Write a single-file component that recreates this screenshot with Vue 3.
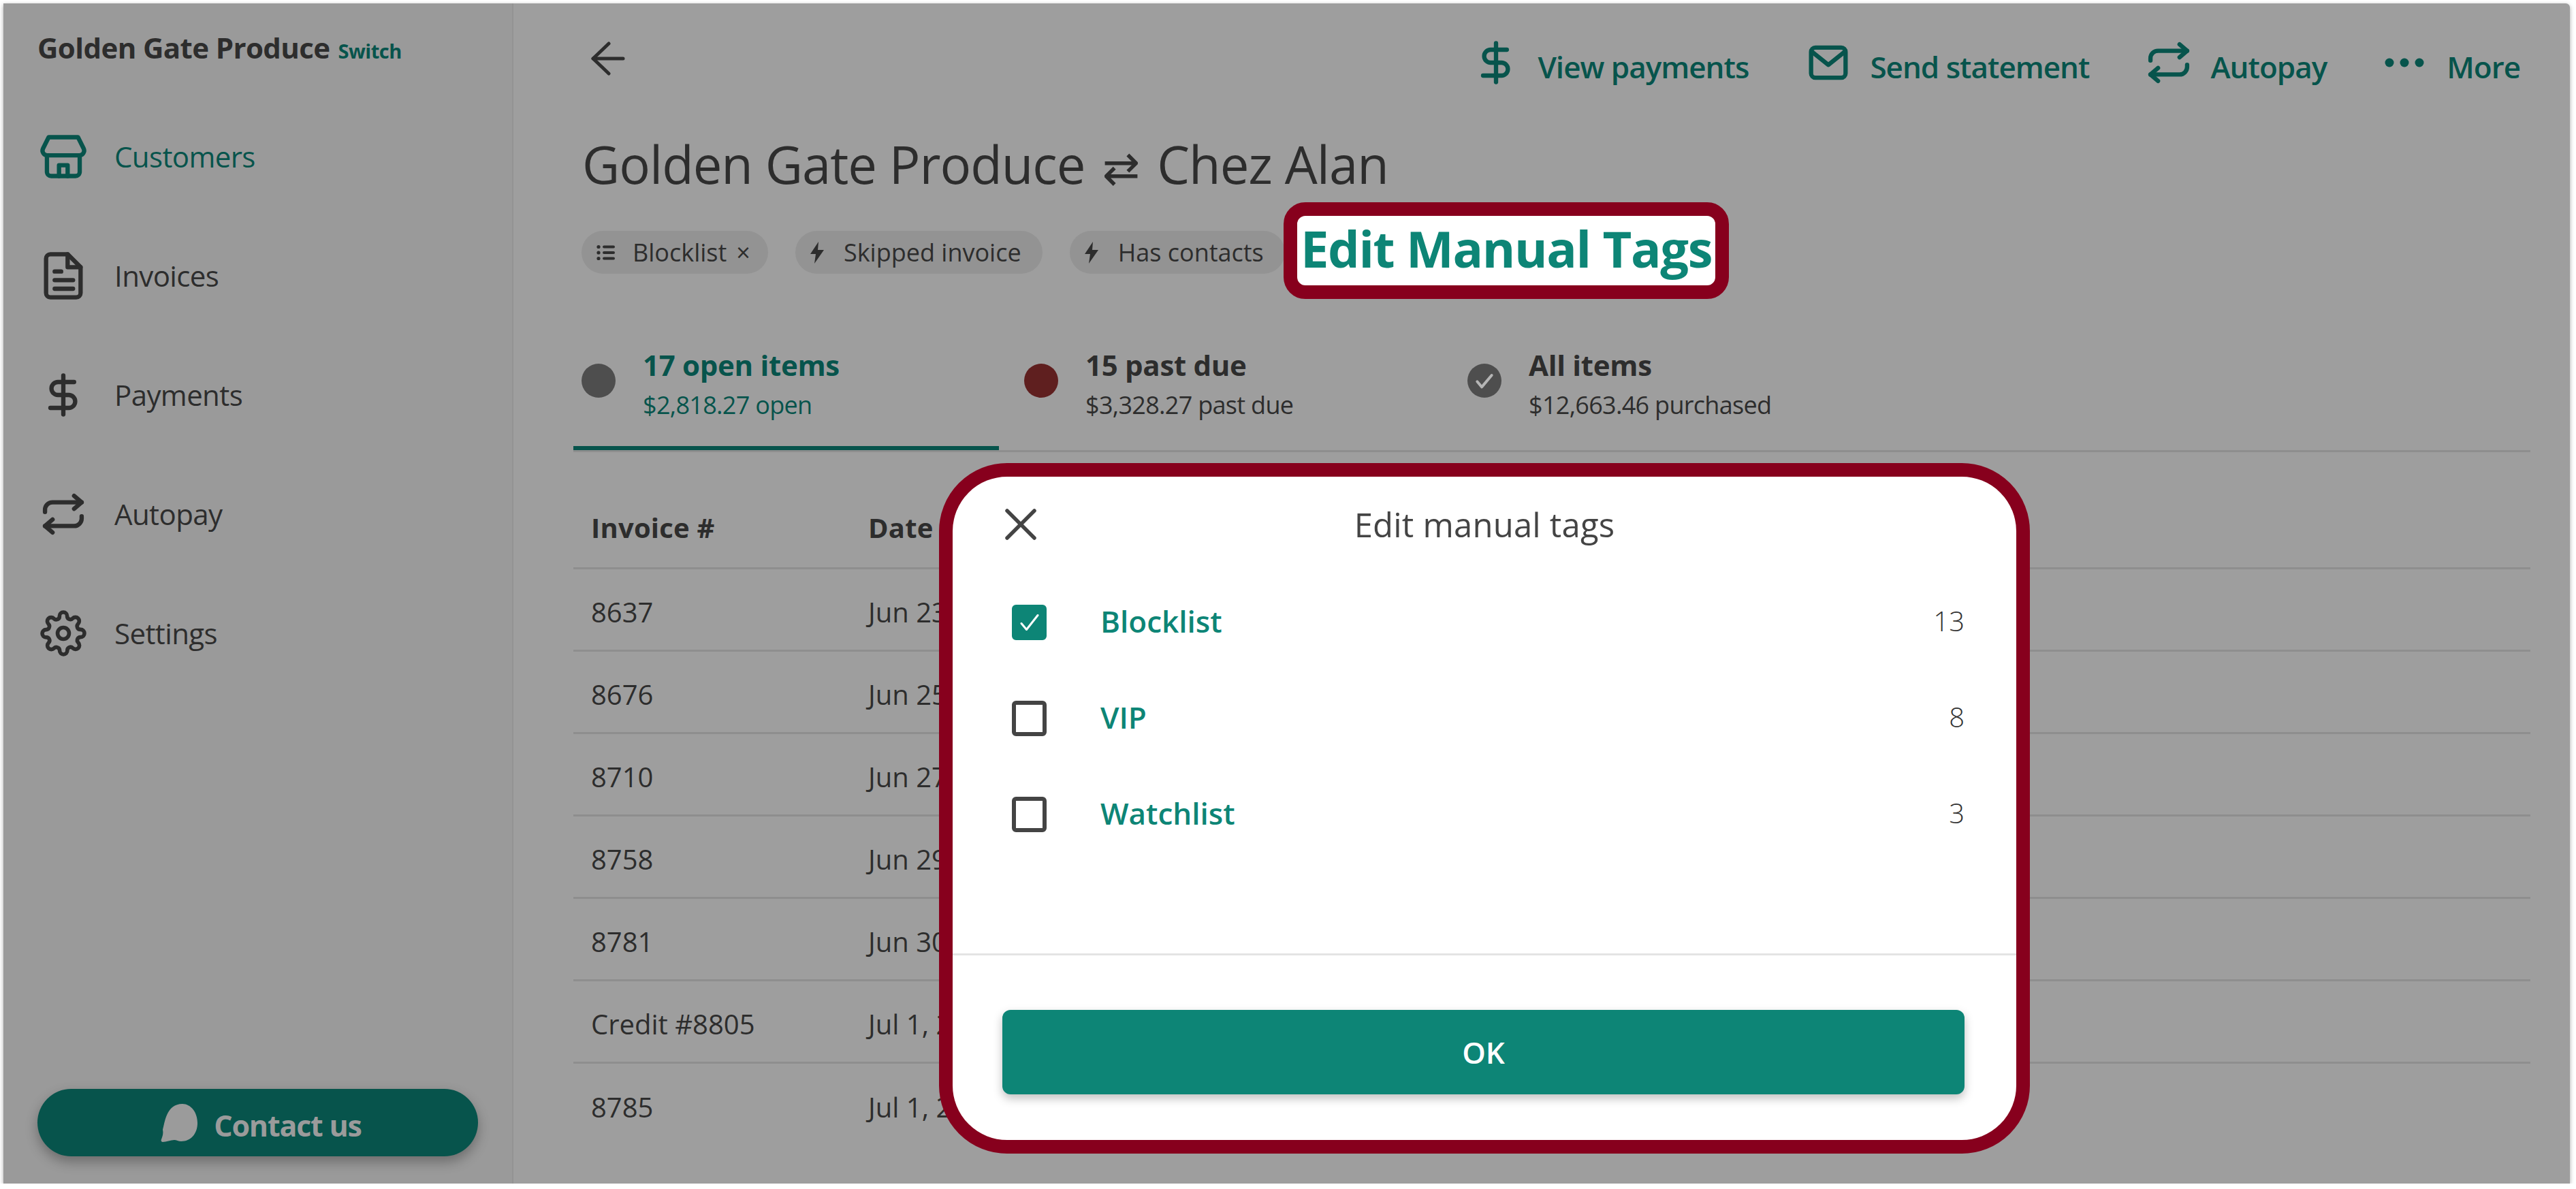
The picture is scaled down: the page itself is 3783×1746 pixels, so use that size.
<script setup>
import { ref } from "vue";

const ICONS = {
  store: [
    "M5.2 3h13.6l2.6 5.2a2.2 2.2 0 0 1-2 3.2H4.6a2.2 2.2 0 0 1-2-3.2z",
    "M4.4 11.4V19a2 2 0 0 0 2 2h11.2a2 2 0 0 0 2-2v-7.6",
    "M10 21v-5h4v5",
  ],
  doc: [
    "M6 2h8l6 6v12a2 2 0 0 1-2 2H6a2 2 0 0 1-2-2V4a2 2 0 0 1 2-2z",
    "M14 2v6h6",
    "M8 10h3",
    "M8 14h8.5",
    "M8 18h8.5",
  ],
  dollar: ["M12 3v18", "M17 6H9.5a3 3 0 0 0 0 6h5a3 3 0 0 1 0 6H6"],
  repeat: [
    "M17 3.5l3.5 3-3.5 3",
    "M3.5 11V10a3.5 3.5 0 0 1 3.5-3.5h13.5",
    "M7 20.5l-3.5-3 3.5-3",
    "M20.5 13v1a3.5 3.5 0 0 1-3.5 3.5H3.5",
  ],
  gear: [
    "M15 12a3 3 0 1 1-6 0 3 3 0 0 1 6 0z",
    "M19.4 15a1.65 1.65 0 0 0 .33 1.82l.06.06a2 2 0 0 1 0 2.83 2 2 0 0 1-2.83 0l-.06-.06a1.65 1.65 0 0 0-1.82-.33 1.65 1.65 0 0 0-1 1.51V21a2 2 0 0 1-2 2 2 2 0 0 1-2-2v-.09A1.65 1.65 0 0 0 9 19.4a1.65 1.65 0 0 0-1.82.33l-.06.06a2 2 0 0 1-2.83 0 2 2 0 0 1 0-2.83l.06-.06a1.65 1.65 0 0 0 .33-1.82 1.65 1.65 0 0 0-1.51-1H3a2 2 0 0 1-2-2 2 2 0 0 1 2-2h.09A1.65 1.65 0 0 0 4.6 9a1.65 1.65 0 0 0-.33-1.82l-.06-.06a2 2 0 0 1 0-2.83 2 2 0 0 1 2.83 0l.06.06a1.65 1.65 0 0 0 1.82.33H9a1.65 1.65 0 0 0 1-1.51V3a2 2 0 0 1 2-2 2 2 0 0 1 2 2v.09a1.65 1.65 0 0 0 1 1.51 1.65 1.65 0 0 0 1.82-.33l.06-.06a2 2 0 0 1 2.83 0 2 2 0 0 1 0 2.83l-.06.06a1.65 1.65 0 0 0-.33 1.82V9a1.65 1.65 0 0 0 1.51 1H21a2 2 0 0 1 2 2 2 2 0 0 1-2 2h-.09a1.65 1.65 0 0 0-1.51 1z",
  ],
  mail: ["M6 5h12a2 2 0 0 1 2 2v10a2 2 0 0 1-2 2H6a2 2 0 0 1-2-2V7a2 2 0 0 1 2-2z", "M4.5 7L12 13l7.5-6"],
};

const navItems = [
  { label: "Customers", icon: "store", box: "0 0 24 24", active: true },
  { label: "Invoices", icon: "doc", box: "0 0 24 24" },
  { label: "Payments", icon: "dollar", box: "0 0 24 24" },
  { label: "Autopay", icon: "repeat", box: "0 0 24 24" },
  { label: "Settings", icon: "gear", box: "-1.5 -1.5 27 27" },
];

const actions = [
  { label: "View payments", icon: "dollar" },
  { label: "Send statement", icon: "mail" },
  { label: "Autopay", icon: "repeat" },
];

const tabs = [
  { title: "17 open items", sub: "$2,818.27 open", dot: "grey", active: true },
  { title: "15 past due", sub: "$3,328.27 past due", dot: "red" },
  { title: "All items", sub: "$12,663.46 purchased", dot: "grey", check: true },
];

const rows = [
  ["8637", "Jun 23, 2023"],
  ["8676", "Jun 25, 2023"],
  ["8710", "Jun 27, 2023"],
  ["8758", "Jun 29, 2023"],
  ["8781", "Jun 30, 2023"],
  ["Credit #8805", "Jul 1, 2023"],
  ["8785", "Jul 1, 2023"],
];

const tags = ref([
  { name: "Blocklist", count: 13, checked: true },
  { name: "VIP", count: 8, checked: false },
  { name: "Watchlist", count: 3, checked: false },
]);
</script>

<template>
  <div class="window">
    <aside class="sidebar">
      <div class="org">
        <span class="org-name">Golden Gate Produce</span>
        <a class="org-switch">Switch</a>
      </div>
      <nav class="nav">
        <a v-for="item in navItems" :key="item.label" class="nav-item" :class="{ active: item.active }">
          <svg class="nav-icon" :viewBox="item.box" fill="none" stroke="currentColor" stroke-width="2" stroke-linecap="round" stroke-linejoin="round">
            <path v-for="d in ICONS[item.icon]" :key="d" :d="d" />
          </svg>
          <span>{{ item.label }}</span>
        </a>
      </nav>
      <button class="contact" type="button">
        <svg viewBox="0 0 54 56" width="54" height="56" fill="currentColor">
          <path d="M32 0C44 0 54 12 54 28 54 44 44 55 30 55 26 55 23 53 20 53 15 53 8 56 3 56 1 56 0 54 1 52 3 47 4 43 3 38 6 28 8 0 32 0z" />
        </svg>
        <span class="contact-label">Contact us</span>
      </button>
    </aside>

    <main class="main">
      <header class="topbar">
        <svg class="back" viewBox="0 0 50 50" fill="none" stroke="currentColor" stroke-width="5" stroke-linecap="round" stroke-linejoin="round">
          <path d="M47 25H3" />
          <path d="M26 3L3 25l23 22" />
        </svg>
        <div class="actions">
          <a v-for="a in actions" :key="a.label" class="action">
            <svg class="action-icon" viewBox="0 0 24 24" fill="none" stroke="currentColor" stroke-width="2" stroke-linecap="round" stroke-linejoin="round">
              <path v-for="d in ICONS[a.icon]" :key="d" :d="d" />
            </svg>
            <span>{{ a.label }}</span>
          </a>
          <a class="action action-more">
            <svg class="more-icon" viewBox="0 0 60 14" fill="currentColor">
              <circle cx="8" cy="7" r="6.5" />
              <circle cx="30" cy="7" r="6.5" />
              <circle cx="52" cy="7" r="6.5" />
            </svg>
            <span>More</span>
          </a>
        </div>
      </header>

      <h1 class="title">Golden Gate Produce <span class="swap">⇄</span> Chez Alan</h1>

      <div class="chips">
        <span class="chip">
          <svg class="chip-list" viewBox="0 0 27 24" fill="currentColor">
            <circle cx="3" cy="3.5" r="2.6" />
            <circle cx="3" cy="12" r="2.6" />
            <circle cx="3" cy="20.5" r="2.6" />
            <rect x="9" y="1.5" width="18" height="4" rx="2" />
            <rect x="9" y="10" width="18" height="4" rx="2" />
            <rect x="9" y="18.5" width="18" height="4" rx="2" />
          </svg>
          Blocklist
          <span class="chip-x">×</span>
        </span>
        <span class="chip chip-auto">
          <svg class="chip-bolt" viewBox="0 0 20 32" fill="currentColor">
            <path d="M12 0L0 18h8L6 32l14-20h-9z" />
          </svg>
          Skipped invoice
        </span>
        <span class="chip chip-auto">
          <svg class="chip-bolt" viewBox="0 0 20 32" fill="currentColor">
            <path d="M12 0L0 18h8L6 32l14-20h-9z" />
          </svg>
          Has contacts
        </span>
      </div>

      <div class="tabs">
        <div v-for="t in tabs" :key="t.title" class="tab" :class="{ active: t.active }">
          <span class="dot" :class="t.dot">
            <svg v-if="t.check" viewBox="0 0 24 24" width="32" height="32" fill="none" stroke="#b5b5b5" stroke-width="3" stroke-linecap="round" stroke-linejoin="round">
              <path d="M4 13l5 6L20 6" />
            </svg>
          </span>
          <div class="tab-text">
            <div class="tab-title">{{ t.title }}</div>
            <div class="tab-sub">{{ t.sub }}</div>
          </div>
        </div>
      </div>

      <div class="table">
        <div class="table-row head">
          <span class="col-num">Invoice #</span>
          <span>Date</span>
        </div>
        <div v-for="r in rows" :key="r[0]" class="table-row">
          <span class="col-num">{{ r[0] }}</span>
          <span>{{ r[1] }}</span>
        </div>
      </div>
    </main>

    <div class="callout"><span class="callout-text">Edit Manual Tags</span></div>

    <section class="modal" role="dialog" aria-modal="true">
      <header class="modal-head">
        <svg class="modal-close" viewBox="0 0 46 46" fill="none" stroke="#444" stroke-width="5.5" stroke-linecap="round">
          <path d="M3 3l40 40M43 3L3 43" />
        </svg>
        <h2 class="modal-title">Edit manual tags</h2>
      </header>
      <ul class="tag-list">
        <li v-for="tag in tags" :key="tag.name" class="tag-row">
          <span class="box" :class="{ checked: tag.checked }">
            <svg v-if="tag.checked" viewBox="0 0 24 24" width="36" height="36" fill="none" stroke="#fff" stroke-width="2" stroke-linecap="round" stroke-linejoin="round">
              <path d="M4 13l5 6L20 5" />
            </svg>
          </span>
          <span class="tag-name">{{ tag.name }}</span>
          <span class="tag-count">{{ tag.count }}</span>
        </li>
      </ul>
      <footer class="modal-foot">
        <button class="ok" type="button">OK</button>
      </footer>
    </section>
  </div>
</template>

<style>
html,
body {
  margin: 0;
  background: #fff;
  overflow: hidden;
}
</style>

<style scoped>
.window {
  position: relative;
  display: flex;
  width: 3769px;
  height: 1733px;
  margin: 5px 0 0 5px;
  background: #9e9e9e;
  border-radius: 0 6px 0 0;
  box-shadow: 0 2px 6px rgba(0, 0, 0, 0.35);
  overflow: hidden;
  font-family: "Open Sans", "Noto Sans", sans-serif;
  color: #2d2d2d;
}

.sidebar {
  display: flex;
  flex-direction: column;
  box-sizing: border-box;
  width: 749px;
  padding: 40px 50px 40px;
  background: #9a9a9a;
  border-right: 2px solid #939393;
}

.org {
  display: flex;
  align-items: baseline;
  gap: 12px;
  line-height: 50px;
  white-space: nowrap;
}

.org-name {
  font-size: 42px;
  font-weight: 700;
  letter-spacing: -0.6px;
}

.org-switch {
  font-size: 29px;
  font-weight: 700;
  color: #07544c;
  letter-spacing: -0.5px;
}

.nav {
  display: flex;
  flex-direction: column;
  margin-top: 42px;
}

.nav-item {
  display: flex;
  align-items: center;
  gap: 37px;
  height: 175px;
  font-size: 42px;
  letter-spacing: -0.6px;
}

.nav-item.active {
  color: #07544c;
  font-weight: 500;
}

.nav-icon {
  width: 76px;
  height: 76px;
  flex: none;
}

.contact {
  display: flex;
  align-items: center;
  justify-content: center;
  gap: 24px;
  width: 647px;
  height: 99px;
  margin-top: auto;
  padding: 0 0 0 10px;
  border: none;
  border-radius: 50px;
  background: #07544c;
  color: #9b9b9b;
  font: 700 43px "Open Sans", sans-serif;
  letter-spacing: -1.2px;
  box-shadow: 0 8px 18px rgba(0, 0, 0, 0.3);
}

.contact-label {
  padding-top: 8px;
}

.main {
  flex: 1;
  min-width: 0;
  box-sizing: border-box;
  padding: 50px 58px 0 88px;
}

.topbar {
  display: flex;
  align-items: center;
  justify-content: space-between;
  height: 60px;
  padding-right: 15px;
}

.back {
  width: 50px;
  height: 50px;
  margin-left: 26px;
  margin-top: 2px;
}

.actions {
  display: flex;
  align-items: center;
  gap: 79px;
  margin-top: 26px;
  color: #07544c;
  font-size: 44px;
  font-weight: 600;
  letter-spacing: -1px;
}

.action {
  display: flex;
  align-items: center;
  gap: 23px;
}

.action-more {
  margin-left: 5px;
}

.action-icon {
  width: 76px;
  height: 76px;
  margin-top: -12px;
}

.more-icon {
  width: 60px;
  height: 14px;
  margin-top: -12px;
  margin-right: 9px;
}

.title {
  margin: 76px 0 0 13px;
  font-size: 76px;
  font-weight: 500;
  line-height: 100px;
  white-space: nowrap;
  letter-spacing: -1px;
}

.swap {
  margin: 0 7px;
  font-family: "DejaVu Sans", sans-serif;
  font-size: 66px;
}

.chips {
  display: flex;
  gap: 40px;
  margin: 41px 0 0 12px;
}

.chip {
  display: flex;
  align-items: center;
  height: 63px;
  padding: 0 26px 0 22px;
  border-radius: 32px;
  background: #939393;
  font-size: 36px;
  white-space: nowrap;
}

.chip-auto {
  padding-right: 31px;
}

.chip-list {
  width: 27px;
  height: 24px;
  margin-right: 26px;
}

.chip-bolt {
  width: 20px;
  height: 32px;
  margin-right: 29px;
}

.chip-x {
  margin-left: 14px;
  font-size: 36px;
  line-height: 1;
}

.tabs {
  display: flex;
  box-sizing: border-box;
  height: 262px;
  padding-top: 88px;
  border-bottom: 3px solid #8e8e8e;
}

.tab {
  display: flex;
  align-items: center;
  gap: 40px;
  height: 154px;
  padding-bottom: 11px;
  border-bottom: 6px solid transparent;
}

.tab:nth-child(1) {
  width: 613px;
  padding-left: 12px;
}

.tab:nth-child(2) {
  width: 611px;
  padding-left: 37px;
}

.tab:nth-child(3) {
  padding-left: 40px;
}

.tab.active {
  border-bottom-color: #07544c;
  color: #07544c;
}

.dot {
  display: flex;
  align-items: center;
  justify-content: center;
  flex: none;
  width: 50px;
  height: 50px;
  border-radius: 50%;
  margin-top: -16px;
}

.dot.grey {
  background: #4e4e4e;
}

.dot.red {
  background: #5f1f1f;
}

.tab-text {
  margin-top: -5px;
}

.tab-title {
  font-size: 42px;
  font-weight: 700;
  line-height: 59px;
  letter-spacing: -0.3px;
}

.tab-sub {
  font-size: 36px;
  line-height: 59px;
  letter-spacing: -0.7px;
}

.table-row {
  display: flex;
  align-items: center;
  box-sizing: border-box;
  height: 121px;
  padding-top: 6px;
  border-bottom: 3px solid #8e8e8e;
  font-size: 40px;
}

.table-row:last-child {
  border-bottom: none;
}

.table-row.head {
  height: 172px;
  padding-top: 51px;
  font-weight: 700;
  font-size: 40px;
  letter-spacing: 0.2px;
}

.table-row span {
  white-space: nowrap;
}

.col-num {
  width: 407px;
  padding-left: 26px;
}

.callout {
  position: absolute;
  left: 1880px;
  top: 292px;
  box-sizing: border-box;
  display: flex;
  align-items: center;
  justify-content: center;
  width: 654px;
  height: 142px;
  border: 20px solid #87001d;
  border-radius: 32px;
  background: #fff;
  color: #0d8576;
  font-size: 74px;
  font-weight: 700;
  letter-spacing: -1.4px;
  white-space: nowrap;
}

.callout-text {
  margin-top: -8px;
}

.modal {
  position: absolute;
  left: 1374px;
  top: 675px;
  box-sizing: border-box;
  display: flex;
  flex-direction: column;
  width: 1602px;
  height: 1014px;
  border: 20px solid #87001d;
  border-radius: 100px;
  background: #fff;
  color: #444;
}

.modal-head {
  position: relative;
  display: flex;
  align-items: center;
  justify-content: center;
  height: 140px;
}

.modal-close {
  position: absolute;
  left: 77px;
  top: 47px;
  width: 46px;
  height: 46px;
}

.modal-title {
  margin: 0;
  font-size: 49px;
  font-weight: 400;
  letter-spacing: 0.2px;
}

.tag-list {
  flex: 1;
  margin: 0;
  padding: 3px 76px 0 87px;
  list-style: none;
}

.tag-row {
  display: flex;
  align-items: center;
  height: 141px;
}

.box {
  display: flex;
  align-items: center;
  justify-content: center;
  box-sizing: border-box;
  width: 51px;
  height: 52px;
  border: 6px solid #444;
  border-radius: 6px;
}

.box.checked {
  border-color: #0d8576;
  background: #0d8576;
}

.tag-name {
  margin-left: 79px;
  margin-top: -4px;
  color: #0d8576;
  font-size: 44px;
  font-weight: 600;
}

.tag-count {
  margin-left: auto;
  margin-top: -4px;
  font-size: 40px;
  font-weight: 300;
  color: #333;
}

.modal-foot {
  display: flex;
  align-items: flex-start;
  box-sizing: border-box;
  height: 274px;
  padding: 80px 76px 0 73px;
  border-top: 3px solid #e4e4e4;
}

.ok {
  width: 100%;
  height: 124px;
  border: none;
  border-radius: 12px;
  background: #0d8576;
  color: #fff;
  font: 600 44px "Open Sans", sans-serif;
  box-shadow: 0 6px 14px rgba(0, 0, 0, 0.25);
}
</style>
